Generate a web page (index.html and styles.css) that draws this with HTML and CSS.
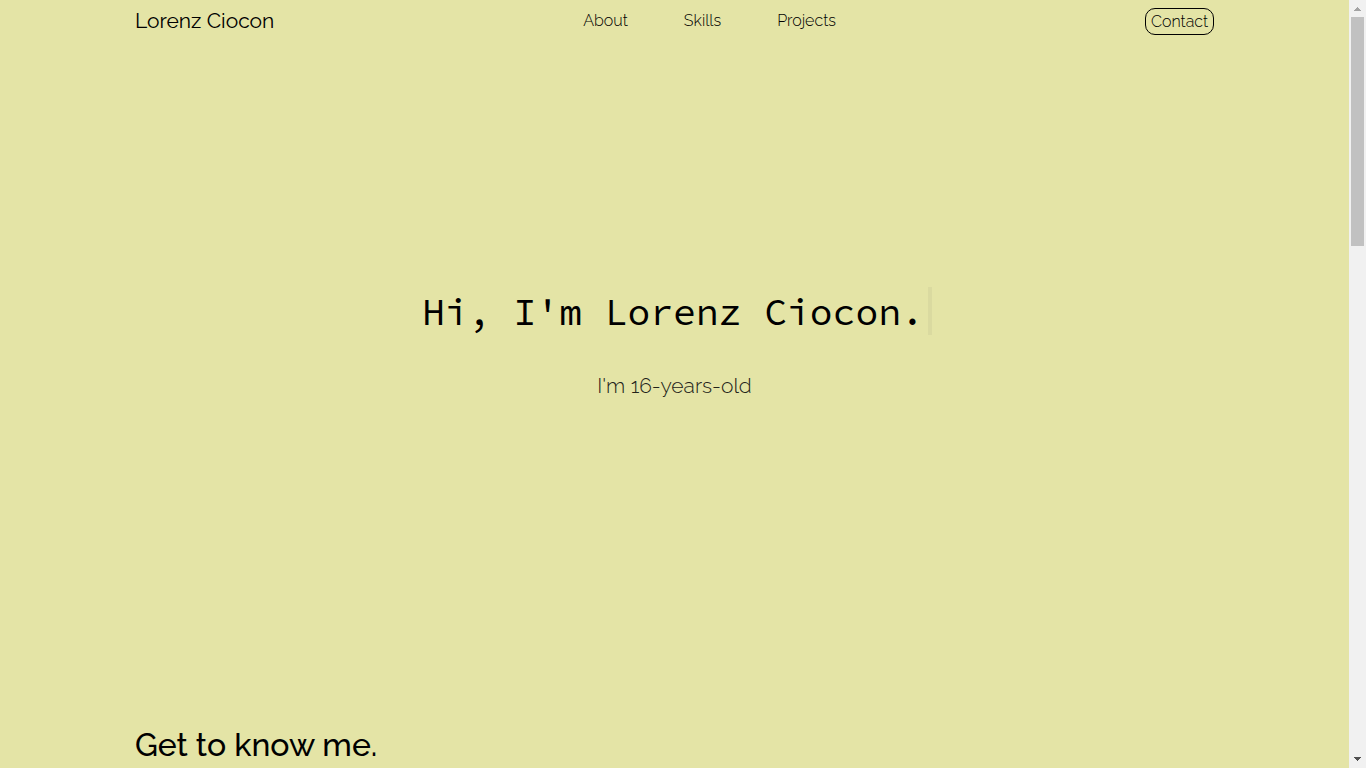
FILE: index.html
```html
<!DOCTYPE html>
<html lang="en">
<head>
<meta charset="utf-8">
<meta name="viewport" content="width=device-width, initial-scale=1">
<title>Lorenz Ciocon</title>
<link rel="stylesheet" href="styles.css">
</head>
<body>
<div class="page">
  <header class="nav">
    <a class="brand" href="#home">Lorenz Ciocon</a>
    <nav class="links">
      <a href="#about">About</a>
      <a href="#skills">Skills</a>
      <a href="#projects">Projects</a>
    </nav>
    <button class="contact" type="button">Contact</button>
  </header>
  <main>
    <section class="hero" id="home">
      <h1 class="typed">Hi, I'm Lorenz Ciocon.</h1>
      <p class="tagline">I'm 16-years-old</p>
    </section>
    <section class="about" id="about">
      <h2>Get to know me.</h2>
    </section>
  </main>
</div>
<div class="scrollbar" aria-hidden="true">
  <svg class="arrow" viewBox="0 0 17 17" shape-rendering="crispEdges"><path fill="#a3a3a3" d="M8 7h1v1h1v1h1v1h1v1H5v-1h1V9h1V8h1z"/></svg>
  <div class="track"><div class="thumb"></div></div>
  <svg class="arrow" viewBox="0 0 17 17" shape-rendering="crispEdges"><path fill="#505050" d="M5 6h7v1h-1v1h-1v1H9v1H8V9H7V8H6V7H5z"/></svg>
</div>
</body>
</html>
```
FILE: styles.css
```css
* {
  box-sizing: border-box;
}

body {
  margin: 0;
  height: 100vh;
  display: grid;
  grid-template-columns: 1fr 17px;
  grid-template-rows: 100vh;
  overflow: hidden;
  background: #e4e4a6;
  color: #000;
  font-family: Raleway, Lato, sans-serif;
  font-weight: 300;
}

.page {
  overflow: hidden;
}

.nav {
  width: 80%;
  margin: 0 auto;
  padding-top: 8px;
  display: flex;
  justify-content: space-between;
  align-items: flex-start;
}

.nav a {
  color: inherit;
  text-decoration: none;
}

.brand {
  font-size: 21px;
  line-height: 26px;
  font-weight: 400;
}

.links {
  display: flex;
  gap: 56px;
  font-size: 16px;
  line-height: 26px;
}

.contact {
  padding: 0 5px;
  border: 1px solid #000;
  border-radius: 10px;
  background: transparent;
  color: inherit;
  font: inherit;
  font-size: 16px;
  line-height: 25px;
}

.hero {
  padding-top: 252px;
  display: flex;
  flex-direction: column;
  align-items: center;
}

.typed {
  margin: 0;
  padding: 2px 4px 0 5px;
  border-right: 4px solid #dadaa0;
  font-family: "Source Code Pro", "Liberation Mono", monospace;
  font-size: 38px;
  line-height: 46px;
  font-weight: 400;
}

.tagline {
  margin: 38px 0 0;
  font-size: 21px;
  line-height: 26px;
  color: #222219;
}

.about {
  width: 80%;
  margin: 0 auto;
  padding-top: 326px;
}

.about h2 {
  margin: 0;
  font-size: 32px;
  line-height: 40px;
  font-weight: 500;
}

.scrollbar {
  display: flex;
  flex-direction: column;
  background: #f1f1f1;
}

.arrow {
  display: block;
  width: 17px;
  height: 17px;
}

.track {
  flex: 1;
  padding: 0 2px;
}

.thumb {
  height: 229px;
  background: #c1c1c1;
}
```
